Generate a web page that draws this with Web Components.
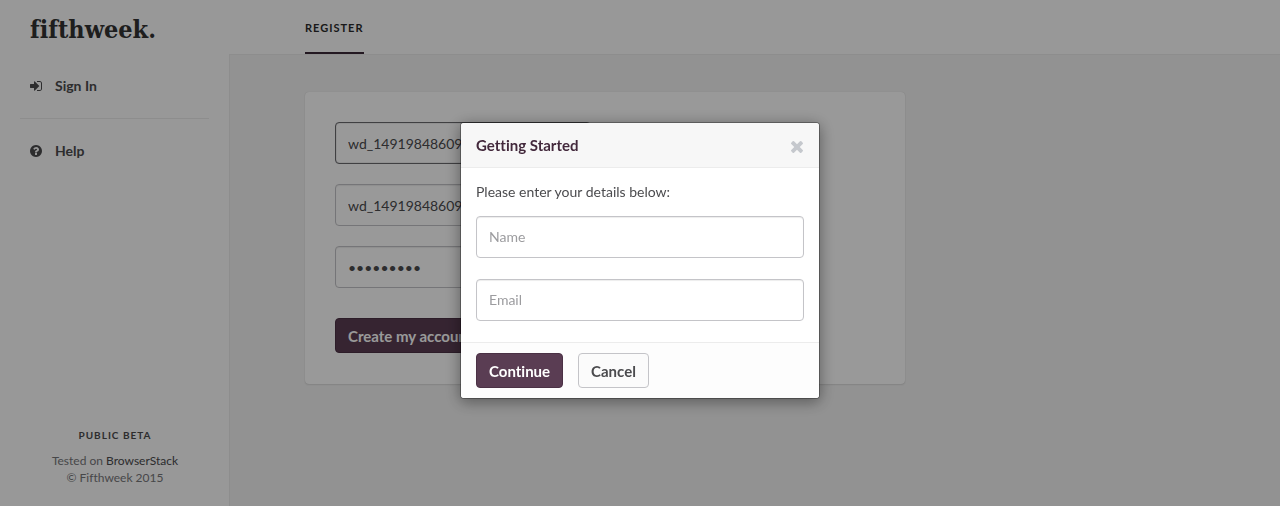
<!DOCTYPE html>
<html lang="en">
<head>
<meta charset="utf-8">
<title>Register - Fifthweek</title>
<style>
  body { margin: 0; font: 14px/18px Lato, "Liberation Sans", sans-serif; font-variant-ligatures: none; color: #4b4b4e; background: #f4f4f4; }
</style>
</head>
<body>
<ff-app>
  <ff-sidebar slot="side">
    <ff-nav-item icon="signin">Sign In</ff-nav-item>
    <ff-nav-item icon="help" separated>Help</ff-nav-item>
  </ff-sidebar>
  <ff-tab slot="tabs">Register</ff-tab>
  <ff-card>
    <ff-field label="Username" value="wd_14919848609" active></ff-field>
    <ff-field label="Email address" value="wd_14919848609"></ff-field>
    <ff-field label="Password" type="password" value="password1"></ff-field>
    <ff-button slot="actions" kind="primary">Create my account</ff-button>
  </ff-card>
</ff-app>
<ff-modal heading="Getting Started">
  <span slot="intro">Please enter your details below:</span>
  <ff-field label="Name" placeholder="Name"></ff-field>
  <ff-field label="Email" type="email" placeholder="Email"></ff-field>
  <ff-button slot="actions" kind="primary">Continue</ff-button>
  <ff-button slot="actions">Cancel</ff-button>
</ff-modal>

<script>
const ICONS = {
  signin: ['128 128 1536 1536', 'M1312 896q0 26-19 45l-544 544q-19 19-45 19t-45-19-19-45v-288h-448q-26 0-45-19t-19-45v-384q0-26 19-45t45-19h448v-288q0-26 19-45t45-19 45 19l544 544q19 19 19 45zm352-352v704q0 119-84.500 203.500t-203.500 84.500h-320q-13 0-22.500-9.500t-9.500-22.500q0-4-1-20t-.5-26.500 3-23.500 10-19.500 20.500-6.500h320q66 0 113-47t47-113v-704q0-66-47-113t-113-47h-312l-11.500-1-11.500-3-8-5.500-7-9-2-13.500q0-4-1-20t-.5-26.500 3-23.500 10-19.500 20.500-6.500h320q119 0 203.500 84.500t84.500 203.500z'],
  help: ['128 128 1536 1536', 'M1024 1376v-192q0-14-9-23t-23-9h-192q-14 0-23 9t-9 23v192q0 14 9 23t23 9h192q14 0 23-9t9-23zm256-672q0-88-55.500-163t-138.500-116-170-41q-243 0-371 213-15 24 8 42l132 100q7 6 19 6 16 0 25-12 53-68 86-92 34-24 86-24 48 0 85.500 26t37.500 59q0 38-20 61t-68 45q-63 28-115.500 86.500t-52.500 125.500v36q0 14 9 23t23 9h192q14 0 23-9t9-23q0-19 21.500-49.500t54.500-49.500q32-18 49-28.500t46-35 44.500-48 28-60.500 12.500-81zm384 192q0 209-103 385.500t-279.500 279.500-385.500 103-385.500-103-279.500-279.500-103-385.500 103-385.500 279.500-279.500 385.500-103 385.500 103 279.500 279.500 103 385.500z'],
  close: ['302 366 1188 1188', 'M1490 1322q0 40-28 68l-136 136q-28 28-68 28t-68-28l-294-294-294 294q-28 28-68 28t-68-28l-136-136q-28-28-28-68t28-68l294-294-294-294q-28-28-28-68t28-68l136-136q28-28 68-28t68 28l294 294 294-294q28-28 68-28t68 28l136 136q28 28 28 68t-28 68l-294 294 294 294q28 28 28 68z']
};
const icon = n => `<svg viewBox="${ICONS[n][0]}" width="12" height="12" fill="currentColor" aria-hidden="true"><path d="${ICONS[n][1]}"/></svg>`;

function define(name, render) {
  customElements.define(name, class extends HTMLElement {
    constructor() {
      super();
      this.attachShadow({ mode: 'open' }).innerHTML =
        '<style>*{box-sizing:border-box}:host{box-sizing:border-box}</style>' + render(this);
    }
  });
}

define('ff-app', () => `
  <style>
    :host { display: grid; grid-template-columns: 229px minmax(0, 1fr); min-height: 100vh; background: #fdfdfd; }
    .page { display: flex; flex-direction: column; }
    header { height: 54px; padding-left: 76px; display: flex; }
    main { flex: 1; padding: 37px 75px; background: #f4f4f4; border: 1px solid #ebebeb; border-width: 1px 0 0 1px; }
  </style>
  <slot name="side"></slot>
  <div class="page">
    <header><slot name="tabs"></slot></header>
    <main><slot></slot></main>
  </div>`);

define('ff-sidebar', () => `
  <style>
    :host { display: flex; flex-direction: column; padding: 16px 20px 20px; }
    .logo { padding: 0 10px; height: 54px; font: bold 25px/28px "DejaVu Serif Condensed", "DejaVu Serif", serif; font-variant-ligatures: none; color: #323232; text-decoration: none; white-space: nowrap; }
    footer { margin-top: auto; text-align: center; font-size: 12px; line-height: 17px; color: #77777a; padding-left: 1px; }
    h2 { margin: 0 0 8px; font-size: 10px; line-height: 17px; letter-spacing: 1px; text-transform: uppercase; color: #4b4b4e; }
    p { margin: 0; }
    footer a { color: #4b4b4e; text-decoration: none; }
  </style>
  <a class="logo" href="#">fifthweek.</a>
  <nav><slot></slot></nav>
  <footer>
    <h2>Public Beta</h2>
    <p>Tested on <a href="#">BrowserStack</a></p>
    <p>© Fifthweek 2015</p>
  </footer>`);

define('ff-nav-item', el => `
  <style>
    :host { display: block; }
    :host([separated]) { margin-top: 16px; padding-top: 16px; border-top: 1px solid #ececec; }
    a { display: flex; align-items: center; gap: 13px; height: 32px; padding: 0 10px; font-weight: bold; color: #4b4b4e; text-decoration: none; }
  </style>
  <a href="#">${icon(el.getAttribute('icon'))}<slot></slot></a>`);

define('ff-tab', () => `
  <style>
    :host { display: flex; }
    a { display: flex; align-items: center; padding-top: 4px; border-bottom: 2px solid #3b2937; font-size: 11px; font-weight: bold; letter-spacing: 1px; text-transform: uppercase; color: #2b2b2c; text-decoration: none; }
  </style>
  <a href="#"><slot></slot></a>`);

define('ff-card', () => `
  <style>
    :host { display: block; max-width: 600px; padding: 30px 30px 31px; background: #fff; border-radius: 4px; box-shadow: 0 0 1px rgba(0,0,0,.15), 0 1px 2px rgba(0,0,0,.1); }
    .fields { display: grid; gap: 20px; max-width: 256px; margin-bottom: 30px; }
    .actions { display: flex; }
  </style>
  <form>
    <div class="fields"><slot></slot></div>
    <div class="actions"><slot name="actions"></slot></div>
  </form>`);

define('ff-field', el => `
  <style>
    :host { display: block; }
    input { display: block; width: 100%; height: 42px; padding: 0 12px; border: 1px solid #c4c4c8; border-radius: 4px; background: #fff; font: inherit; color: #4b4b4e; box-shadow: inset 0 1px 1px rgba(0,0,0,.075); outline: 0; }
    input:placeholder-shown { padding-bottom: 2px; }
    :host([active]) input { border-color: #6b6b6e; box-shadow: inset 0 0 1px #6b6b6e; }
    input::placeholder { color: #9c9c9f; opacity: 1; }
  </style>
  <input type="${el.getAttribute('type') || 'text'}" aria-label="${el.getAttribute('label')}"
    value="${el.getAttribute('value') || ''}" ${el.hasAttribute('placeholder') ? `placeholder="${el.getAttribute('placeholder')}"` : ''}>`);

define('ff-button', () => `
  <style>
    :host { display: block; }
    button { height: 35px; padding: 0 12px; border: 1px solid #c4c4c8; border-radius: 4px; background: #fbfbfb; font: bold 15px/18px Lato, sans-serif; font-variant-ligatures: none; color: #4b4b4e; }
    :host([kind=primary]) button { background: #5a3d53; border-color: #4b3145; color: #fff; }
  </style>
  <button type="button"><slot></slot></button>`);

define('ff-modal', el => `
  <style>
    :host { position: fixed; inset: 0; display: flex; justify-content: center; align-items: flex-start; padding: 122px 20px 20px; background: rgba(0,0,0,.4); }
    section { width: 100%; max-width: 360px; border: 1px solid rgba(0,0,0,.3); border-radius: 4px; background: #fff; background-clip: padding-box; box-shadow: 0 3px 15px rgba(0,0,0,.4); }
    header { display: flex; align-items: center; justify-content: space-between; height: 45px; padding: 0 15px; background: #f7f7f7; border-bottom: 1px solid #ececec; border-radius: 3px 3px 0 0; }
    h1 { margin: 0; font-size: 15px; line-height: 20px; color: #43293c; }
    header button { display: flex; padding: 3px 1px 0; border: 0; background: none; color: #c5c8cd; }
    .body { display: grid; gap: 21px; padding: 15px 15px 21px; }
    p { margin: 0 0 -6px; }
    footer { display: flex; gap: 15px; padding: 10px 15px; background: #fdfdfd; border-top: 1px solid #ececec; border-radius: 0 0 3px 3px; }
  </style>
  <section role="dialog" aria-modal="true" aria-labelledby="title">
    <header><h1 id="title">${el.getAttribute('heading')}</h1><button type="button" aria-label="Close">${icon('close')}</button></header>
    <div class="body"><p><slot name="intro"></slot></p><slot></slot></div>
    <footer><slot name="actions"></slot></footer>
  </section>`);
</script>
</body>
</html>
